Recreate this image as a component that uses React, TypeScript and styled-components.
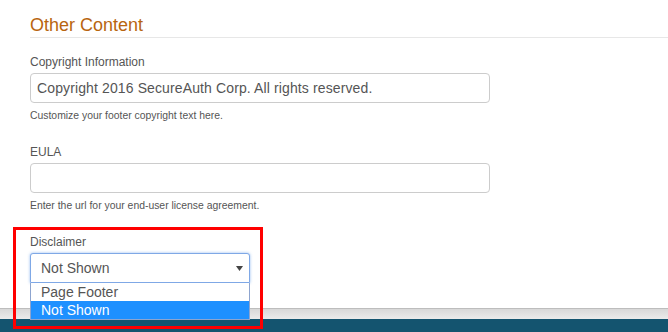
import React from "react";
import styled, { createGlobalStyle } from "styled-components";

const Global = createGlobalStyle`
  html, body { margin: 0; padding: 0; background: #fff; overflow: hidden; }
  body { font-family: "Liberation Sans", Arial, Helvetica, sans-serif; }
  * { box-sizing: border-box; }
`;

const Page = styled.div`
  width: 668px;
  height: 332px;
  display: flex;
  flex-direction: column;
  overflow: hidden;
`;

const Main = styled.main`
  height: 308px;
  flex: none;
  padding-left: 30px;
  position: relative;
  z-index: 2;
`;

const SectionTitle = styled.h2`
  margin: 0;
  padding-top: 15px;
  padding-bottom: 2px;
  font-size: 18px;
  line-height: 20px;
  font-weight: normal;
  color: #b8650f;
  border-bottom: 1px solid #e7e7e7;
`;

const Form = styled.div`
  display: flex;
  flex-direction: column;
  gap: 21px;
  padding-top: 16px;
`;

const Group = styled.div`
  position: relative;
  display: flex;
  flex-direction: column;
`;

const Label = styled.label`
  font-size: 12px;
  line-height: 17px;
  color: #555;
  margin-bottom: 2px;
`;

const TextInput = styled.input<{ $w: number }>`
  width: ${(p) => p.$w}px;
  height: 30px;
  padding: 0 6px;
  border: 1px solid #cccccc;
  border-radius: 4px;
  font-family: "Liberation Sans", Arial, sans-serif;
  font-size: 14px;
  letter-spacing: 0.12px;
  color: #555;
  background: #fff;
  outline: none;
`;

const Help = styled.div`
  margin-top: 5px;
  font-size: 10.4px;
  line-height: 15px;
  color: #555;
`;

const SelectBox = styled.div`
  width: 220px;
  height: 30px;
  padding: 0 6px 0 10px;
  display: flex;
  align-items: center;
  justify-content: space-between;
  border: 1px solid #7fa8e6;
  border-radius: 3px 3px 0 0;
  box-shadow: 0 0 3px rgba(102, 160, 233, 0.7);
  font-size: 14px;
  color: #555;
  background: #fff;
`;

const Caret = styled.svg`
  width: 7px;
  height: 5px;
  display: block;
`;

const OptionList = styled.ul`
  position: absolute;
  left: 0;
  top: 49px;
  width: 220px;
  margin: 0;
  padding: 0;
  list-style: none;
  border: 1px solid #8da4cf;
  border-top: none;
  background: #fff;
  z-index: 3;
`;

const Option = styled.li<{ $selected?: boolean }>`
  height: 18px;
  line-height: 18px;
  padding-left: 10px;
  font-size: 14px;
  color: ${(p) => (p.$selected ? "#fff" : "#555")};
  background: ${(p) => (p.$selected ? "#1e90ff" : "#fff")};
`;

const Annotation = styled.div`
  position: absolute;
  left: -17px;
  top: -7px;
  width: 250px;
  height: 102px;
  border: 3px solid #ff0000;
  pointer-events: none;
  z-index: 4;
`;

const FooterBand = styled.div`
  height: 11px;
  flex: none;
  border-top: 1px solid #bdbdbd;
  background: linear-gradient(#d8d8d8, #ebebeb);
`;

const FooterBar = styled.footer`
  flex: 1;
  background: #14546f;
`;

export default function App() {
  return (
    <Page>
      <Global />
      <Main>
        <SectionTitle>Other Content</SectionTitle>
        <Form>
          <Group>
            <Label>Copyright Information</Label>
            <TextInput
              $w={460}
              readOnly
              value="Copyright 2016 SecureAuth Corp. All rights reserved."
            />
            <Help>Customize your footer copyright text here.</Help>
          </Group>
          <Group>
            <Label>EULA</Label>
            <TextInput $w={460} readOnly value="" />
            <Help>Enter the url for your end-user license agreement.</Help>
          </Group>
          <Group>
            <Label>Disclaimer</Label>
            <SelectBox>
              <span>Not Shown</span>
              <Caret viewBox="0 0 7 5">
                <path d="M0 0 H7 L3.5 5 Z" fill="#444" />
              </Caret>
            </SelectBox>
            <OptionList>
              <Option>Page Footer</Option>
              <Option $selected>Not Shown</Option>
            </OptionList>
            <Annotation />
          </Group>
        </Form>
      </Main>
      <FooterBand />
      <FooterBar />
    </Page>
  );
}
